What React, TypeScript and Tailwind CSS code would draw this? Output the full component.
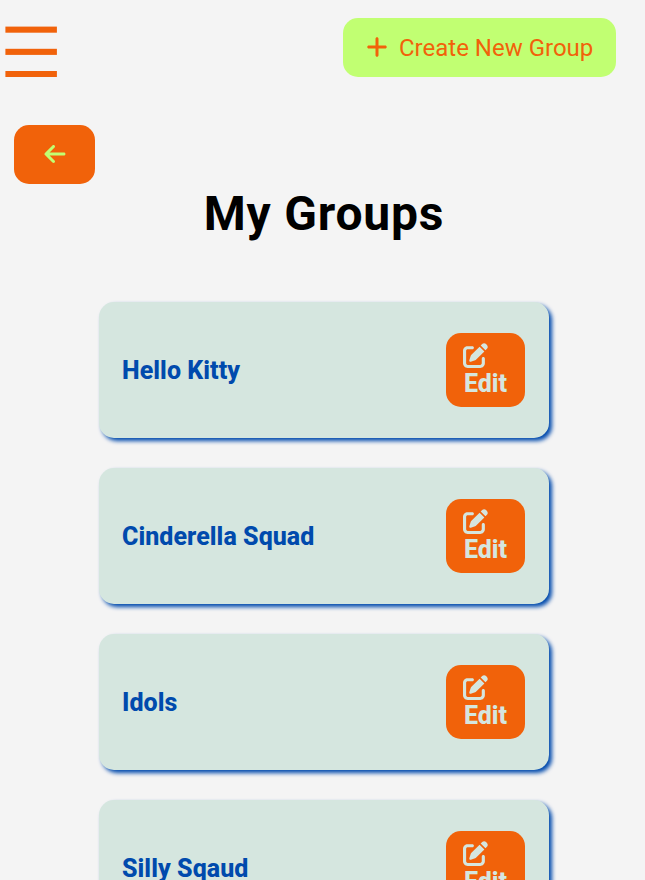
import { FaArrowLeft, FaPenToSquare, FaPlus } from "react-icons/fa6";

const groups = ["Hello Kitty", "Cinderella Squad", "Idols", "Silly Sqaud"];

function MenuButton() {
  return (
    <button aria-label="Menu" className="ml-[5px] mt-[8px]">
      <svg width="53" height="52" viewBox="0 0 53 52" fill="#f1620a" className="block">
        <rect x="0.4" y="0.6" width="51.5" height="6.1" />
        <rect x="0.4" y="22.8" width="51.5" height="6.1" />
        <rect x="0.4" y="45" width="51.5" height="6" />
      </svg>
    </button>
  );
}

function GroupCard({ name }: { name: string }) {
  return (
    <li className="flex h-[136px] items-center justify-between rounded-[15px] bg-[#d5e6df] pl-[23px] pr-6 shadow-[3px_3px_4px_#004aad]">
      <span className="pt-[2px] text-[25px] leading-[30px] font-extrabold tracking-[0.05px] text-[#004aad]">{name}</span>
      <button className="flex h-[74px] w-[79px] flex-col items-start rounded-[15px] bg-[#f1620a] pl-[17px] pt-[10px] text-[#d5e6df]">
        <FaPenToSquare className="size-[25px]" />
        <span className="ml-px mt-px text-[25px] leading-[29px] font-extrabold">Edit</span>
      </button>
    </li>
  );
}

export default function App() {
  return (
    <div className="h-[880px] overflow-hidden bg-[#f4f4f4] font-['Roboto',sans-serif]">
      <header className="flex h-[125px] items-start justify-between pr-[29px] pt-[18px]">
        <MenuButton />
        <button className="flex h-[59px] w-[273px] items-center rounded-[15px] bg-[#c1ff72] pl-[21.5px] text-[#f1620a]">
          <FaPlus className="mb-px size-6" />
          <span className="ml-[10.5px] whitespace-nowrap text-2xl">Create New Group</span>
        </button>
      </header>
      <button aria-label="Back" className="ml-[14px] flex h-[59px] w-[81px] items-center justify-center rounded-[15px] bg-[#f1620a] pb-px text-[#c1ff72]">
        <FaArrowLeft className="size-6" />
      </button>
      <h1 className="ml-[3px] pt-px text-center text-5xl leading-[58px] font-bold tracking-[0.8px] text-black">My Groups</h1>
      <ul className="ml-[99px] mt-[59px] flex w-[450px] flex-col gap-[30px]">
        {groups.map((name) => (
          <GroupCard key={name} name={name} />
        ))}
      </ul>
    </div>
  );
}
